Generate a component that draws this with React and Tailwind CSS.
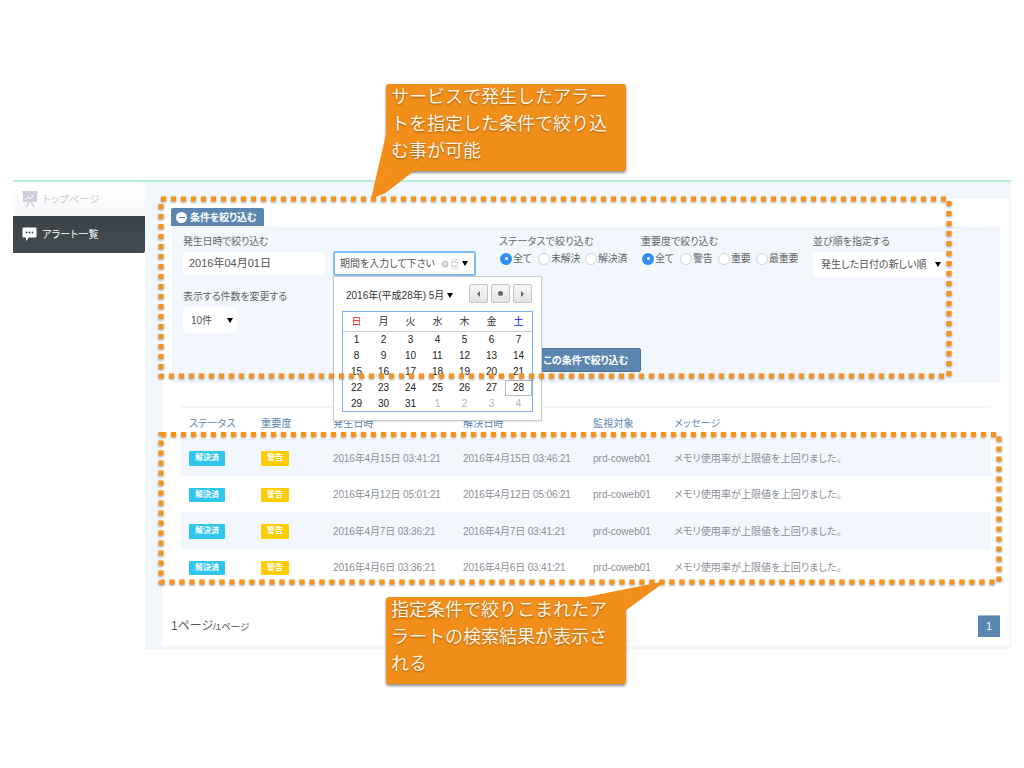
import React from 'react';

const rows = [
  ['2016年4月15日 03:41:21', '2016年4月15日 03:46:21'],
  ['2016年4月12日 05:01:21', '2016年4月12日 05:06:21'],
  ['2016年4月7日 03:36:21', '2016年4月7日 03:41:21'],
  ['2016年4月6日 03:36:21', '2016年4月6日 03:41:21'],
];

const weeks = [
  [1, 2, 3, 4, 5, 6, 7],
  [8, 9, 10, 11, 12, 13, 14],
  [15, 16, 17, 18, 19, 20, 21],
  [22, 23, 24, 25, 26, 27, 28],
  [29, 30, 31, 1, 2, 3, 4],
];

const Arrow = () => (
  <span className="w-0 h-0 border-x-[3.5px] border-x-transparent border-t-[5px] border-t-black" />
);

const Radio = ({ label, checked, className }) => (
  <div className={`flex items-center ${className}`}>
    {checked ? (
      <span className="w-3 h-3 rounded-full bg-[#2f8ff5] flex items-center justify-center mr-px">
        <span className="w-[3px] h-[3px] rounded-full bg-white" />
      </span>
    ) : (
      <span className="w-3 h-3 rounded-full bg-white border border-[#cfd3d8] mr-px" />
    )}
    <span className="tracking-[-0.3px]">{label}</span>
  </div>
);

const Callout = ({ className, tail, children }) => (
  <div className={`absolute w-[240px] h-[87px] bg-[#f28f1a] rounded-[3px] shadow-[0_2px_3px_rgba(0,0,0,0.45)] pl-[5px] text-[18px] leading-[27px] text-[#fdf3e3] [font-feature-settings:normal] [text-shadow:0_1px_2px_rgba(90,50,0,0.55)] ${className}`}>
    {tail}
    <div className="relative">{children}</div>
  </div>
);

export default function App() {
  return (
    <div className="relative w-[1024px] h-[768px] bg-white overflow-hidden pt-[180px] pl-[13px] [font-family:'Liberation_Sans','Noto_Sans_CJK_JP',sans-serif] [font-feature-settings:'palt'] text-[10px] text-[#666]">
      <div className="w-[998px] h-[2px] bg-[#b5eedc]" />
      <div className="flex w-[998px] h-[467px]">
        {/* sidebar */}
        <div className="w-[132px] shrink-0 bg-white">
          <div className="h-[34px] flex items-center pl-[9px] bg-gradient-to-b from-white to-[#f7f8fa] text-[#c6cad3] tracking-[0.4px]">
            <svg width="16" height="17" viewBox="0 0 16 17" className="mr-[5px]">
              <rect x="0" y="0" width="16" height="2" fill="#cdd0da" />
              <rect x="1" y="2" width="14" height="9" fill="#cdd0da" />
              <path d="M3 9l3-3 2 2 4-4" stroke="#fff" strokeWidth="1" fill="none" />
              <path d="M7 11l-3 5M9 11l3 5" stroke="#cdd0da" strokeWidth="1.4" />
            </svg>
            トップページ
          </div>
          <div className="h-[37px] flex items-center pl-[9px] bg-gradient-to-b from-[#3a4248] to-[#434c52] rounded-br-[2px] text-white tracking-[0.2px]">
            <svg width="15" height="15" viewBox="0 0 15 15" className="mr-[5px]">
              <path d="M1.5 0.5h12a1 1 0 0 1 1 1v8a1 1 0 0 1-1 1H7l-3 3.5v-3.500H1.500a1 1 0 0 1-1-1v-8a1 1 0 0 1 1-1z" fill="#fff" />
              <circle cx="4.500" cy="5.500" r="0.900" fill="#3d464c" />
              <circle cx="7.500" cy="5.500" r="0.900" fill="#3d464c" />
              <circle cx="10.500" cy="5.500" r="0.900" fill="#3d464c" />
            </svg>
            アラート一覧
          </div>
        </div>

        {/* main */}
        <div className="flex-1 bg-[#f2f7fd] pl-[17px] pr-px pt-[17px] pb-[3px]">
          <div className="h-full bg-white rounded-[2px] px-[10px] pt-[9px]">
            <div className="w-[93px] h-[18px] -ml-px bg-[#5b86b0] rounded-t-[2px] flex items-center pl-[5px] text-white font-bold tracking-[-0.1px]">
              <span className="w-[11px] h-[11px] rounded-full bg-white flex items-center justify-center mr-[3px]">
                <span className="w-[6px] h-px bg-[#5b86b0]" />
              </span>
              条件を絞り込む
            </div>

            {/* filter panel */}
            <div className="h-[157px] bg-[#f2f7fd] rounded-[2px] pl-[11px] pt-[9px]">
              <div className="flex h-[42px]">
                <div className="w-[150px]">
                  <div className="h-[14px] leading-[14px] tracking-[-0.2px]">発生日時で絞り込む</div>
                  <div className="mt-[3px] w-[142px] h-[23px] bg-white rounded-[2px] pl-[6px] flex items-center text-[11px] text-[#555]">
                    2016年04月01日
                  </div>
                </div>
                <div className="w-[166px] pt-[16px]">
                  <div className="w-[143px] h-[25px] bg-white border-2 border-[#82bcf7] rounded-[2px] pl-[5px] flex items-center text-[#555]">
                    <span className="w-[101px]">期間を入力して下さい</span>
                    <svg width="8" height="8" viewBox="0 0 8 8" className="mr-[2px]">
                      <circle cx="4" cy="4" r="3.500" fill="#c9cdd1" />
                      <path d="M2.500 2.500l3 3M5.500 2.500l-3 3" stroke="#fff" strokeWidth="0.800" />
                    </svg>
                    <svg width="7" height="12" viewBox="0 0 7 12" className="mr-[4px]">
                      <rect x="0.500" y="0.500" width="6" height="11" rx="3" fill="none" stroke="#d0d3d7" />
                      <path d="M2 4.500l1.500-1.500 1.500 1.500M2 7.500l1.500 1.500 1.500-1.500" fill="none" stroke="#777" strokeWidth="0.700" />
                    </svg>
                    <Arrow />
                  </div>
                </div>
                <div className="w-[142px]">
                  <div className="h-[14px] leading-[14px] tracking-[0.2px]">ステータスで絞り込む</div>
                  <div className="flex mt-[2px] pl-px">
                    <Radio checked label="全て" className="w-[38px]" />
                    <Radio label="未解決" className="w-[47px]" />
                    <Radio label="解決済" />
                  </div>
                </div>
                <div className="w-[172px]">
                  <div className="h-[14px] leading-[14px]">重要度で絞り込む</div>
                  <div className="flex mt-[2px] pl-px">
                    <Radio checked label="全て" className="w-[38px]" />
                    <Radio label="警告" className="w-[38px]" />
                    <Radio label="重要" className="w-[38px]" />
                    <Radio label="最重要" />
                  </div>
                </div>
                <div>
                  <div className="h-[14px] leading-[14px]">並び順を指定する</div>
                  <div className="mt-[3px] w-[135px] h-[25px] bg-white rounded-[2px] pl-2 pr-[7px] flex items-center justify-between text-[#555]">
                    発生した日付の新しい順
                    <Arrow />
                  </div>
                </div>
              </div>

              <div className="mt-[13px] h-[14px] leading-[14px] tracking-[-0.1px]">表示する件数を変更する</div>
              <div className="mt-[3px] w-[54px] h-[26px] bg-white rounded-[2px] pl-2 pr-[4px] flex items-center justify-between text-[#555]">
                10件
                <Arrow />
              </div>

              <div className="flex justify-center mt-[15px] pr-[11px]">
                <button className="w-[110px] h-6 bg-[#5b86b0] border border-[#4b7398] rounded-[2px] text-white font-bold">
                  この条件で絞り込む
                </button>
              </div>
            </div>

            {/* result table */}
            <div className="mx-[9px] mt-[23px] border-t-2 border-[#f3f5f8]">
              <div className="grid grid-cols-[72px_72px_130px_130px_81px_1fr] pl-2 h-[31px] items-center text-[#5b86b0] tracking-[0.2px]">
                <span>ステータス</span>
                <span>重要度</span>
                <span>発生日時</span>
                <span>解決日時</span>
                <span>監視対象</span>
                <span>メッセージ</span>
              </div>
              {rows.map((r, i) => (
                <div
                  key={i}
                  className={`grid grid-cols-[72px_72px_130px_130px_81px_1fr] pl-2 pt-[2px] h-[36.5px] items-center text-[#8a9099] ${
                    i % 2 === 0 ? 'bg-[#f2f7fd]' : 'bg-white'
                  }`}
                >
                  <span className="w-9 h-[14.5px] bg-[#2fc6ec] rounded-[1px] flex items-center justify-center text-white text-[8px] font-bold">解決済</span>
                  <span className="w-[28px] h-[14.5px] bg-[#ffcc00] rounded-[1px] flex items-center justify-center text-white text-[8px] font-bold">警告</span>
                  <span className="tracking-[-0.15px]">{r[0]}</span>
                  <span className="tracking-[-0.15px]">{r[1]}</span>
                  <span>prd-coweb01</span>
                  <span className="tracking-[0.1px]">メモリ使用率が上限値を上回りました。</span>
                </div>
              ))}
            </div>

            {/* pager */}
            <div className="flex items-center justify-between mt-[30px]">
              <div className="-ml-px text-[#555] text-[12px]">
                1ページ<span className="text-[9.5px]">/1ページ</span>
              </div>
              <div className="w-[22px] h-[22px] bg-[#5b86b0] border-t border-[#9db8d2] flex items-center justify-center text-white text-[10px]">1</div>
            </div>
          </div>
        </div>
      </div>

      {/* date picker popup */}
      <div className="absolute left-[333px] top-[276px] w-[209px] h-[145px] bg-white border border-[#cccccc] shadow-[0_1px_2px_rgba(0,0,0,0.1)] text-black">
        <div className="flex items-center h-[34px] pl-[12px]">
          <span className="w-[123px] pt-[3px] flex items-center gap-[3px] text-[#333]">
            2016年(平成28年) 5月
            <Arrow />
          </span>
          <div className="flex gap-[3px] pb-[1px]">
            {['left', 'dot', 'right'].map((b) => (
              <div key={b} className="w-[19px] h-[19px] bg-gradient-to-b from-[#f7f7f7] to-[#e4e4e4] border border-[#c4c4c4] rounded-[2px] flex items-center justify-center">
                {b === 'dot' && <span className="w-[5px] h-[5px] rounded-full bg-[#666]" />}
                {b === 'left' && <span className="w-0 h-0 border-y-[3px] border-y-transparent border-r-[3px] border-r-[#666]" />}
                {b === 'right' && <span className="w-0 h-0 border-y-[3px] border-y-transparent border-l-[3px] border-l-[#666]" />}
              </div>
            ))}
          </div>
        </div>
        <div className="ml-[8px] w-[191px] h-[101px] border border-[#80aff5]">
          <div className="grid grid-cols-7 h-[20px] items-center text-center border-b border-[#cfcfcf] text-[#333]">
            <span className="text-[#f01010]">日</span>
            <span>月</span>
            <span>火</span>
            <span>水</span>
            <span>木</span>
            <span>金</span>
            <span className="text-[#1010f0]">土</span>
          </div>
          <div>
            {weeks.map((w, wi) => (
              <div key={wi} className="grid grid-cols-7 h-4 leading-4 text-center text-[#222]">
                {w.map((d, di) => {
                  const dim = wi === 4 && di > 2;
                  const today = wi === 3 && di === 6;
                  return (
                    <span
                      key={di}
                      className={`${dim ? 'text-[#b5b5b5]' : ''} ${today ? 'border border-[#b9b9b9] leading-[14px]' : ''}`}
                    >
                      {d}
                    </span>
                  );
                })}
              </div>
            ))}
          </div>
        </div>
      </div>

      {/* dotted annotation frames */}
      <svg className="absolute inset-0 pointer-events-none" width="1024" height="768">
        <g fill="none" stroke="#f6931e" strokeWidth="5" strokeDasharray="5 5" className="[filter:drop-shadow(0_1px_1px_rgba(0,0,0,0.4))]">
          <rect x="161" y="199" width="788" height="177" />
          <rect x="161" y="434.500" width="838" height="147.500" />
        </g>
      </svg>

      {/* callouts */}
      <Callout
        className="left-[386px] top-[84px]"
        tail={
          <svg className="absolute left-[-16px] top-[50px]" width="46" height="68">
            <path d="M16 0L1 65L15.500 59L44 37H16z" fill="#f28f1a" />
          </svg>
        }
      >
        サービスで発生したアラー<br />トを指定した条件で絞り込<br />む事が可能
      </Callout>
      <Callout
        className="left-[386px] top-[597px]"
        tail={
          <svg className="absolute left-[196px] top-[-17px]" width="90" height="34">
            <path d="M4 17L84 1L43 31V17z" fill="#f28f1a" />
          </svg>
        }
      >
        指定条件で絞りこまれたア<br />ラートの検索結果が表示さ<br />れる
      </Callout>
    </div>
  );
}
